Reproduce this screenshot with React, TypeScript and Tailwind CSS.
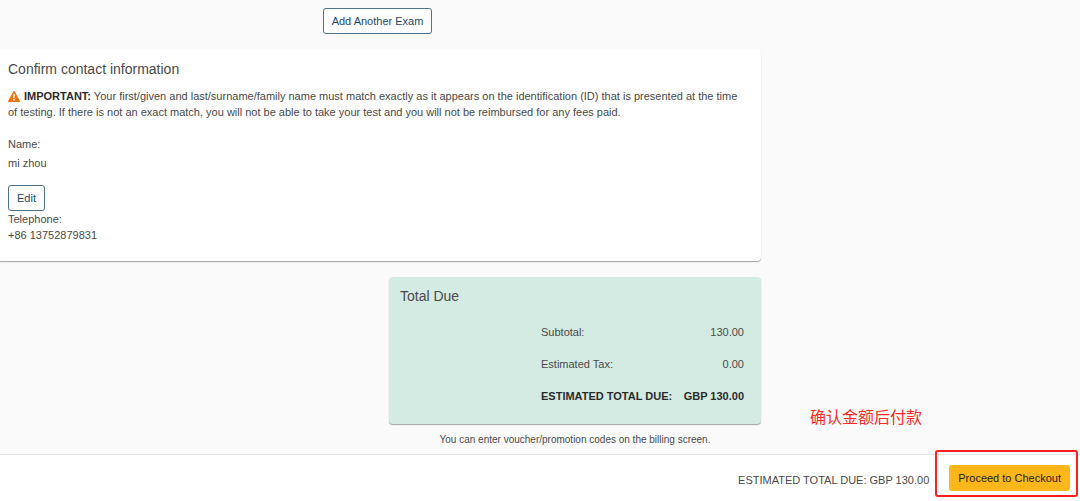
const totals = [
  { label: "Subtotal:", amount: "130.00" },
  { label: "Estimated Tax:", amount: "0.00" },
];

function WarningIcon() {
  return (
    <svg
      viewBox="0 0 24 22"
      className="mr-1 inline-block h-[11px] w-3 align-[-2px]"
      aria-hidden="true"
    >
      <path
        d="M12 1.5 L22.5 20.5 H1.5 Z"
        fill="#ee7410"
        stroke="#ee7410"
        strokeWidth="3"
        strokeLinejoin="round"
      />
      <path d="M10.2 6.5 H13.8 L13.2 14 H10.8 Z" fill="#fff" />
      <circle cx="12" cy="17.5" r="1.8" fill="#fff" />
    </svg>
  );
}

function ContactCard() {
  return (
    <section className="mt-4 rounded-r bg-white pt-2 pr-4 pb-[18px] pl-2 shadow-[0_1px_1px_rgba(0,0,0,0.35)]">
      <h2 className="text-sm leading-[22px]">Confirm contact information</h2>
      <p className="mt-2 leading-4">
        <WarningIcon />
        <strong className="text-[#2b2b2b]">IMPORTANT:</strong> Your first/given
        and last/surname/family name must match exactly as it appears on the
        identification (ID) that is presented at the time of testing. If there
        is not an exact match, you will not be able to take your test and you
        will not be reimbursed for any fees paid.
      </p>
      <dl className="mt-4 leading-4">
        <dt>Name:</dt>
        <dd className="mt-[3px]">mi zhou</dd>
      </dl>
      <button
        type="button"
        className="mt-[14px] block h-[26px] rounded-[3px] border border-[#4d738f] bg-white px-2 text-[#1f4866]"
      >
        Edit
      </button>
      <dl className="leading-4">
        <dt>Telephone:</dt>
        <dd>+86 13752879831</dd>
      </dl>
    </section>
  );
}

function TotalCard() {
  return (
    <section className="mt-4 rounded bg-[#d4ebe4] pt-2 pr-[17px] pb-3 pl-[11px] shadow-[0_1px_1px_rgba(0,0,0,0.35)]">
      <h2 className="text-sm leading-[22px]">Total Due</h2>
      <table className="mt-[9px] ml-auto w-[203px] leading-4">
        <tbody>
          {totals.map((row) => (
            <tr key={row.label} className="h-8">
              <th scope="row" className="text-left font-normal">
                {row.label}
              </th>
              <td className="text-right">{row.amount}</td>
            </tr>
          ))}
          <tr className="h-8 font-bold whitespace-nowrap text-[#2b2b2b]">
            <th scope="row" className="text-left">
              ESTIMATED TOTAL DUE:
            </th>
            <td className="text-right">GBP 130.00</td>
          </tr>
        </tbody>
      </table>
    </section>
  );
}

export default function App() {
  return (
    <div className="flex min-h-screen flex-col bg-[#fafafa] font-['Liberation_Sans','Noto_Sans_CJK_SC',sans-serif] text-[11px] text-[#4a4a4a]">
      <main className="w-full max-w-[761px] grow pt-2">
        <div className="flex justify-center pr-1.5">
          <button
            type="button"
            className="h-[26px] rounded-[3px] border border-[#4d738f] bg-white px-2 text-[#1f4866]"
          >
            Add Another Exam
          </button>
        </div>
        <ContactCard />
        <div className="ml-auto w-full max-w-[372px]">
          <TotalCard />
          <p className="mt-2 text-center text-[10px] leading-4">
            You can enter voucher/promotion codes on the billing screen.
          </p>
        </div>
      </main>
      <footer className="relative flex h-[47px] items-center justify-end gap-5 border-t border-[#e6e6e6] bg-white pr-2.5">
        <span className="pt-1">ESTIMATED TOTAL DUE: GBP 130.00</span>
        <button
          type="button"
          className="h-[26px] rounded-[3px] bg-[#fdb71a] px-[9px] text-[#222]"
        >
          Proceed to Checkout
        </button>
        <span className="absolute right-[158px] bottom-[71px] text-base leading-6 text-[#ff2a22]">
          确认金额后付款
        </span>
        <div className="pointer-events-none absolute right-0.5 bottom-1 h-[47px] w-[143px] rounded-[3px] border-2 border-[#ff2020]" />
      </footer>
    </div>
  );
}
